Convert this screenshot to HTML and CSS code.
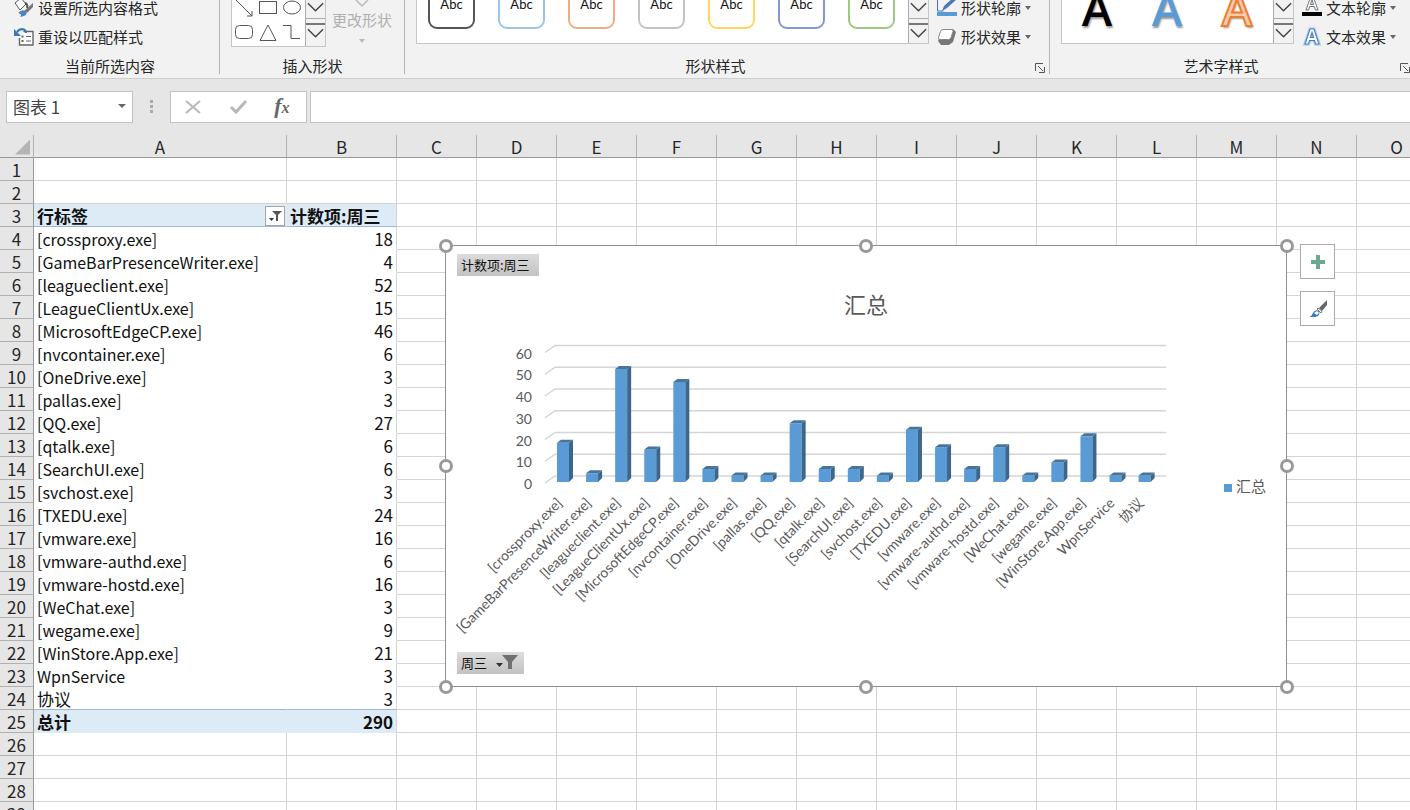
FILE: index.html
```html
<!DOCTYPE html>
<html lang="zh-CN">
<head>
<meta charset="utf-8">
<title>图表 1</title>
<link rel="stylesheet" href="styles.css">
</head>
<body>
<div class="app">
  <header class="ribbon">
    <section class="group group-selection">
      <div class="group-body">
        <div class="command-list">
          <button class="command">
            <svg class="icon" viewBox="0 0 20 20"><path d="M1 5 7 0l5 6-6 6z" fill="#fff" stroke="#555"/><path d="M11 5q3 1 2 5" fill="none" stroke="#555" stroke-width="2"/><path d="M19 5v4l-6 6-3-2z" fill="#777"/><path d="M4 15q4-4 7-2 3 3 0 4.500-3 1.500-5 1 3-2-2-3.500z" fill="#4a86c5"/></svg>
            设置所选内容格式
          </button>
          <button class="command">
            <svg class="icon" viewBox="0 0 20 20"><path d="M9.500 4.500h9.500v13.500H5.500V11" fill="#fff" stroke="#666" stroke-width="1.400"/><path d="M7.500 9.500h2M7.500 14h2" stroke="#666" stroke-width="2.200"/><path d="M12 9.500h5M12 14h5" stroke="#666" stroke-width="1.200"/><path d="M3 5q3-4 7-2.500 2 1 2 3.500" fill="none" stroke="#3c78b4" stroke-width="2.200"/><path d="M0 2v7h7z" fill="#3c78b4"/></svg>
            重设以匹配样式
          </button>
        </div>
      </div>
      <h2 class="group-label">当前所选内容</h2>
    </section>

    <section class="group group-insert">
      <div class="group-body">
        <div class="gallery shapes">
          <svg class="shape-art" viewBox="0 0 73 46" fill="none" stroke="#555"><path d="M4 0 20 16M20 11v5h-5"/><rect x="27.500" y="1.500" width="17" height="12"/><ellipse cx="60" cy="7.500" rx="8.500" ry="6.500"/><rect x="3.500" y="25.500" width="17" height="13" rx="4"/><path d="M36 25 44 40.500H28zM51 25.500h8v13h9"/></svg>
          <div class="scroller"><button class="scroll-btn" aria-label="下一行"><svg viewBox="0 0 20 12"><path d="m2 2 8 8 8-8"/></svg></button><button class="scroll-btn more" aria-label="其他形状"><svg viewBox="0 0 20 12"><path d="m2 2 8 8 8-8"/></svg></button></div>
        </div>
        <button class="change-shape" disabled>
          <svg class="change-icon" viewBox="0 0 16 8"><path d="m2 0 6 6 6-6" fill="none" stroke="#bbb" stroke-width="1.500"/></svg>
          更改形状
          <span class="caret"></span>
        </button>
      </div>
      <h2 class="group-label">插入形状</h2>
    </section>

    <section class="group group-styles">
      <div class="group-body">
        <div class="gallery presets">
          <button class="preset black">Abc</button><button class="preset blue">Abc</button><button class="preset orange">Abc</button><button class="preset gray">Abc</button><button class="preset gold">Abc</button><button class="preset indigo">Abc</button><button class="preset green">Abc</button>
          <div class="scroller"><button class="scroll-btn" aria-label="下一行"><svg viewBox="0 0 20 12"><path d="m2 2 8 8 8-8"/></svg></button><button class="scroll-btn more" aria-label="其他样式"><svg viewBox="0 0 20 12"><path d="m2 2 8 8 8-8"/></svg></button></div>
        </div>
        <div class="command-list">
          <button class="command">
            <svg class="icon" viewBox="0 0 20 20"><path d="M.500 0v13h6" fill="none" stroke="#4472b0"/><path d="m5 13 2-5L17-1l3 2-10 9z" fill="#4a78b8"/><path d="M0 14h20v4H0z" fill="#5b9bd5"/></svg>
            形状轮廓<span class="caret"></span>
          </button>
          <button class="command">
            <svg class="icon" viewBox="0 0 20 20"><path d="M6 2h10l3 3-3 10-4 3H4l-3-4z" fill="#777"/><path d="M6.500 2.500h8q2 0 1.500 2l-2 6q-.500 2-2.500 2H3q-2 0-1.500-2l2-6q.500-2 3-2z" fill="#fff" stroke="#888"/></svg>
            形状效果<span class="caret"></span>
          </button>
        </div>
      </div>
      <h2 class="group-label">形状样式</h2>
      <button class="launcher" aria-label="设置形状格式"><svg viewBox="0 0 10 10"><path d="M.500 8V.500H8M3 3l5 5M9.500 4v5.500H4"/></svg></button>
    </section>

    <section class="group group-wordart">
      <div class="group-body">
        <div class="gallery wordart">
          <button class="art art-black">A</button><button class="art art-blue">A</button><button class="art art-orange">A</button>
          <div class="scroller"><button class="scroll-btn" aria-label="下一行"><svg viewBox="0 0 20 12"><path d="m2 2 8 8 8-8"/></svg></button><button class="scroll-btn more" aria-label="其他艺术字"><svg viewBox="0 0 20 12"><path d="m2 2 8 8 8-8"/></svg></button></div>
        </div>
        <div class="command-list">
          <button class="command">
            <svg class="icon" viewBox="0 0 20 20"><path d="m4 12 5-14h2l5 14h-2.500l-1.200-3.500H7.700L6.500 12zM8.400 6.500h3.200L10 1.500z" fill="#fff" stroke="#555" stroke-width=".8"/><path d="M0 14h20v4H0z"/></svg>
            文本轮廓<span class="caret"></span>
          </button>
          <button class="command">
            <svg class="icon" viewBox="0 0 20 20"><path d="m3 17 5-15h4l5 15h-3.500l-1-3.500h-5l-1 3.500zM8.400 10.500h3.200L10 5.500z" fill="#fff" stroke="#b9d3ef" stroke-width="3.500"/><path d="m3 17 5-15h4l5 15h-3.500l-1-3.500h-5l-1 3.500zM8.400 10.500h3.200L10 5.500z" fill="#fff" stroke="#4a80bf" stroke-width="1.200"/></svg>
            文本效果<span class="caret"></span>
          </button>
        </div>
      </div>
      <h2 class="group-label">艺术字样式</h2>
      <button class="launcher" aria-label="设置文本效果格式"><svg viewBox="0 0 10 10"><path d="M.500 8V.500H8M3 3l5 5M9.500 4v5.500H4"/></svg></button>
    </section>
  </header>

  <div class="formula-bar">
    <button class="name-box">图表 1<span class="caret"></span></button>
    <svg class="grip" viewBox="0 0 4 14"><path d="M0 0h3v3H0zM0 5h3v3H0zM0 10h3v3H0z" fill="#aaa"/></svg>
    <div class="formula-actions">
      <button aria-label="取消"><svg viewBox="0 0 18 18"><path d="m2 3 14 12M16 3 2 15" stroke="#b8b8b8" stroke-width="2" fill="none"/></svg></button>
      <button aria-label="输入"><svg viewBox="0 0 18 18"><path d="m2 9 5 5L17 3" stroke="#b8b8b8" stroke-width="3" fill="none"/></svg></button>
      <button class="fx" aria-label="插入函数">f<span class="fx-sub">x</span></button>
    </div>
    <input class="formula-input" type="text" aria-label="编辑栏">
  </div>

  <main class="sheet">
    <table class="grid">
      <colgroup id="cols"></colgroup>
      <thead><tr id="heads"></tr></thead>
      <tbody id="rows"></tbody>
    </table>

    <figure class="chart">
      <button class="field-btn field-value">计数项:周三</button>
      <figcaption class="chart-title">汇总</figcaption>
      <svg class="plot" id="plot" viewBox="445 245 842 442"></svg>
      <div class="legend"><span class="legend-key"></span>汇总</div>
      <button class="field-btn field-axis">周三
        <svg class="field-filter" viewBox="0 0 22 16"><path d="M0 9h7l-3.500 4z" fill="#333"/><path d="M6 1h16l-6 7v7h-4V8z" fill="#707070"/></svg>
      </button>
      <i class="handle nw"></i><i class="handle n"></i><i class="handle ne"></i><i class="handle w"></i><i class="handle e"></i><i class="handle sw"></i><i class="handle s"></i><i class="handle se"></i>
      <div class="chart-tools">
        <button aria-label="图表元素"><svg viewBox="0 0 20 20"><path d="M8 3h4v5h5v4h-5v5H8v-5H3V8h5z" fill="#6aa88f"/></svg></button>
        <button aria-label="图表样式"><svg viewBox="0 0 20 20"><path d="m19 1-8 8 3 3 5-6z" fill="#666"/><path d="m10 9 4 3-1 2-4-4z" fill="#fff" stroke="#777"/><path d="M1 18q3-1 4-4 2-4 6-2 2 5-4 6z" fill="#3f7ab8"/><path d="m6 14 3-2 2 2-2 2z" fill="#fff"/></svg></button>
      </div>
    </figure>
  </main>
</div>
<script src="app.js"></script>
</body>
</html>
```
FILE: styles.css
```css
* { box-sizing: border-box; }
body {
  margin: 0;
  font-family: "Noto Sans CJK SC", sans-serif;
  color: #262626;
  background: #fff;
}
button {
  margin: 0;
  padding: 0;
  border: 0;
  background: none;
  font: inherit;
  color: inherit;
}
svg { display: block; }
.app {
  display: flex;
  flex-direction: column;
  height: 100vh;
  overflow: hidden;
  background: #e6e6e6;
}

/* ribbon */
.ribbon {
  display: flex;
  flex: none;
  overflow: hidden;
  background: #f2f2f2;
  border-bottom: 1px solid #cfcfcf;
  font-size: 15px;
}
.group {
  position: relative;
  display: flex;
  flex-direction: column;
  flex: none;
  height: 78px;
}
.group::after {
  content: "";
  position: absolute;
  right: 0;
  top: 0;
  height: 74px;
  border-right: 1px solid #b5b5b5;
}
.group-selection { width: 220px; }
.group-insert { width: 185px; }
.group-styles { flex: 1; }
.group-wordart { width: 360px; }
.group-wordart::after { display: none; }
.group-body {
  display: flex;
  align-items: flex-end;
  height: 52px;
}
.group-label {
  margin: 0;
  text-align: center;
  font-size: 15px;
  font-weight: 400;
  line-height: 28px;
}
.group-wordart .group-label { width: 342px; }
.group-styles .group-label { padding-right: 24px; }
.command-list { display: flex; flex-direction: column; padding-bottom: 1px; }
.group-selection .command-list { padding-left: 14px; }
.group-styles .command-list { flex: none; width: 113px; }
.command {
  display: flex;
  align-items: center;
  gap: 4px;
  height: 29px;
  white-space: nowrap;
}
.icon { width: 20px; height: 20px; overflow: visible; }
.caret {
  border: 3px solid transparent;
  border-top: 4px solid #666;
  border-bottom-width: 0;
}
.name-box .caret { border-width: 4px 4px 0; }
.gallery {
  display: flex;
  align-items: flex-end;
  background: #fff;
  border: 1px solid #c6c6c6;
  border-top: 0;
}
.shapes { height: 47px; margin: 0 6px 5px 11px; }
.shape-art { width: 73px; height: 46px; }
.scroller {
  display: flex;
  flex-direction: column;
  flex: none;
  width: 20px;
  height: 100%;
  margin-left: auto;
  background: #f2f2f2;
  border-left: 1px solid #ababab;
}
.scroll-btn {
  display: flex;
  flex-direction: column;
  flex: none;
  height: 19px;
  padding-top: 1px;
  border-bottom: 1px solid #ababab;
}
.scroll-btn.more { flex: 1; padding-top: 4px; border-bottom: 0; }
.scroll-btn.more::before {
  content: "";
  width: 100%;
  margin-bottom: 2px;
  border-top: 2px solid #777;
}
.scroll-btn svg { width: 19px; height: 12px; fill: none; stroke: #444; stroke-width: 1.5; }
.change-shape {
  display: flex;
  flex-direction: column;
  align-items: center;
  height: 52px;
  line-height: 24px;
  color: #b0b0b0;
}
.change-icon { width: 16px; height: 8px; }
.change-shape .caret { margin-top: 7px; border-top-color: #b8b8b8; }
.presets {
  flex: 1;
  height: 44px;
  margin: 0 8px 8px 11px;
  padding-left: 11px;
}
.preset {
  flex: none;
  width: 47px;
  height: 60px;
  margin-bottom: 14px;
  padding-top: 10px;
  border: 2px solid;
  border-radius: 9px;
  background: #fff;
  font-family: Lato, sans-serif;
  font-size: 13px;
  color: #111;
}
.preset + .preset { margin-left: 23px; }
.preset.black { border-color: #555; }
.preset.blue { border-color: #9dc3e6; }
.preset.orange { border-color: #f0ac84; }
.preset.gray { border-color: #c3c3c3; }
.preset.gold { border-color: #ffd75e; }
.preset.indigo { border-color: #8497d0; }
.preset.green { border-color: #9dc983; }
.wordart { width: 233px; height: 44px; margin: 0 8px 8px 11px; }
.art {
  width: 70px;
  height: 70px;
  font-family: "Open Sans", sans-serif;
  font-size: 46px;
  font-weight: 600;
  line-height: 70px;
  text-shadow: 1px 2px 2px #999;
}
.art-black { color: #000; }
.art-blue { color: #5b9bd5; }
.art-orange { color: #f8cbad; -webkit-text-stroke: 2px #ed7d31; }
.launcher { position: absolute; right: 5px; bottom: 5px; }
.group-wordart .launcher { right: 0; }
.launcher svg { width: 10px; height: 10px; fill: none; stroke: #555; }

/* formula bar */
.formula-bar {
  display: flex;
  flex: none;
  height: 56px;
  padding: 12px 0 12px 6px;
}
.name-box, .formula-actions, .formula-input {
  border: 1px solid #c3c3c3;
  background: #fff;
}
.name-box {
  display: flex;
  align-items: center;
  justify-content: space-between;
  width: 127px;
  padding: 0 6px 2px;
  font-size: 17px;
  color: #444;
}
.grip { width: 4px; height: 14px; margin: 9px 16px 0 17px; }
.formula-actions {
  display: flex;
  align-items: center;
  justify-content: space-around;
  width: 137px;
  padding-right: 3px;
}
.formula-actions svg { width: 18px; height: 18px; }
.fx {
  font-family: "Liberation Serif", serif;
  font-size: 22px;
  font-style: italic;
  font-weight: 700;
  line-height: 24px;
  color: #666;
}
.fx-sub { font-size: 16px; }
.formula-input {
  flex: 1;
  min-width: 0;
  margin-left: 3px;
  border-right: 0;
  border-radius: 0;
}

/* sheet */
.sheet {
  position: relative;
  flex: 1;
  min-height: 0;
  overflow: hidden;
  font-size: 17px;
}
.grid {
  width: 1437px;
  table-layout: fixed;
  border-collapse: separate;
  border-spacing: 0;
}
.col-head { width: 34px; }
.col-a { width: 253px; }
.col-b { width: 110px; }
.col-n { width: 80px; }
.grid th, .grid td {
  height: 23px;
  padding: 2px 3px 0;
  line-height: 20px;
  white-space: nowrap;
  border-right: 1px solid #d4d4d4;
  border-bottom: 1px solid #d4d4d4;
}
.grid td { background: #fff; color: #111; }
.grid thead th, .grid .row-head {
  background: #e6e6e6;
  font-weight: 400;
  border-color: #b1b1b1;
}
.grid thead th { border-bottom-color: #999; }
.grid .row-head { padding: 2px 0 0; border-right-color: #999; }
.corner-mark {
  width: 15px;
  height: 15px;
  margin-left: auto;
  background: #b4b4b4;
  clip-path: polygon(100% 0, 100% 100%, 0 100%);
}
.grid .pivot { border-bottom-color: #fff; }
.grid .pivot-a { border-right-color: #fff; }
.grid .pivot-name { font-size: 16px; }
.grid .pivot-num { text-align: right; }
.grid .pivot-band {
  background: #ddebf7;
  border-bottom-color: #ddebf7;
  font-weight: 700;
}
.grid .pivot-band.pivot-a { border-right-color: #ddebf7; }
.grid .pivot-rule { border-bottom-color: #9bb8d8; }
.pivot-title { display: flex; align-items: center; justify-content: space-between; height: 20px; }
.filter-btn {
  width: 20px;
  height: 20px;
  margin-right: -2px;
  border: 1px solid #a6a6a6;
  background: #fff;
}
.filter-btn svg { width: 18px; height: 18px; }

/* chart */
.chart {
  position: absolute;
  left: 445px;
  top: 110px;
  width: 842px;
  height: 442px;
  margin: 0;
  background: #fff;
  border: 1px solid #8f8f8f;
  color: #595959;
}
.plot {
  position: absolute;
  left: -1px;
  top: -1px;
  width: 842px;
  height: 442px;
}
.plot text { font-family: Lato, "Noto Sans CJK SC", sans-serif; font-size: 14px; fill: #595959; text-anchor: end; }
.plot .grid-line { fill: none; stroke: #d5d5d5; stroke-width: 1.5; }
.bar-front { fill: #5b9bd5; }
.bar-side { fill: #3b668d; }
.bar-top { fill: #45759f; }
.chart-title {
  padding-top: 40px;
  text-align: center;
  font-size: 22px;
  line-height: 34px;
}
.legend {
  position: absolute;
  right: 20px;
  top: 230px;
  display: flex;
  align-items: center;
  gap: 4px;
  font-size: 15px;
  line-height: 20px;
}
.legend-key { width: 8px; height: 8px; margin-top: 4px; background: #5b9bd5; }
.field-btn {
  position: absolute;
  z-index: 1;
  left: 11px;
  display: flex;
  align-items: center;
  height: 22px;
  padding: 0 4px 2px;
  background: linear-gradient(#dcdcdc, #c2c2c2);
  color: #111;
  font-size: 13px;
}
.field-value { top: 8px; width: 82px; }
.field-axis { top: 406px; width: 67px; gap: 9px; }
.field-filter { width: 22px; height: 16px; flex: none; }
.handle {
  position: absolute;
  width: 14px;
  height: 14px;
  border: 3px solid #999;
  border-radius: 50%;
  background: #fff;
}
.nw, .n, .ne { top: -7px; }
.w, .e { top: 213px; }
.sw, .s, .se { bottom: -8px; }
.nw, .w, .sw { left: -7px; }
.n, .s { left: 413px; }
.ne, .e, .se { right: -8px; }
.chart-tools {
  position: absolute;
  left: 854px;
  top: -2px;
  display: grid;
  gap: 12px;
}
.chart-tools button {
  display: grid;
  place-items: center;
  width: 35px;
  height: 35px;
  border: 1px solid #ababab;
  background: #fff;
}
.chart-tools svg { width: 20px; height: 20px; }
```
FILE: app.js
```js
const items = [
  ["[crossproxy.exe]", 18], ["[GameBarPresenceWriter.exe]", 4], ["[leagueclient.exe]", 52],
  ["[LeagueClientUx.exe]", 15], ["[MicrosoftEdgeCP.exe]", 46], ["[nvcontainer.exe]", 6],
  ["[OneDrive.exe]", 3], ["[pallas.exe]", 3], ["[QQ.exe]", 27], ["[qtalk.exe]", 6],
  ["[SearchUI.exe]", 6], ["[svchost.exe]", 3], ["[TXEDU.exe]", 24], ["[vmware.exe]", 16],
  ["[vmware-authd.exe]", 6], ["[vmware-hostd.exe]", 16], ["[WeChat.exe]", 3],
  ["[wegame.exe]", 9], ["[WinStore.App.exe]", 21], ["WpnService", 3], ["协议", 3]
];
const letters = [..."ABCDEFGHIJKLMNO"];

document.getElementById("cols").innerHTML = '<col class="col-head">' +
  letters.map(l => `<col class="col-${l === "A" ? "a" : l === "B" ? "b" : "n"}">`).join("");
document.getElementById("heads").innerHTML = '<th><div class="corner-mark"></div></th>' +
  letters.map(l => `<th scope="col">${l}</th>`).join("");

const filterButton = '<button class="filter-btn" aria-label="筛选"><svg viewBox="0 0 18 18"><path d="M6 4h10l-4 4v6h-2V8z" fill="#555"/><path d="M3 11h5l-2.500 3z" fill="#333"/></svg></button>';

// Cells A and B of one row of the pivot table, or plain cells outside it
function pivotCells(row) {
  if (row === 3) {
    return `<td class="pivot-band pivot-rule pivot-a"><div class="pivot-title">行标签${filterButton}</div></td><td class="pivot-band pivot-rule">计数项:周三</td>`;
  }
  if (row === 25) {
    return '<td class="pivot-band pivot-a">总计</td><td class="pivot-band pivot-num">290</td>';
  }
  if (row > 3 && row < 25) {
    const [name, count] = items[row - 4];
    const rule = row === 24 ? " pivot-rule" : "";
    const size = row === 24 ? "" : " pivot-name";
    return `<td class="pivot pivot-a${rule}${size}">${name}</td><td class="pivot pivot-num${rule}">${count}</td>`;
  }
  return "<td></td><td></td>";
}

let rows = "";
for (let r = 1; r <= 40; r++) {
  rows += `<tr><th scope="row" class="row-head">${r}</th>${pivotCells(r)}${"<td></td>".repeat(letters.length - 2)}</tr>`;
}
document.getElementById("rows").innerHTML = rows;

// 3-D column plot: one unit of value is 2.175 high, the walls recede by 10 x 7
const unit = 2.175;
let plot = "";
for (let v = 0; v <= 60; v += 10) {
  const y = 476 - v * unit;
  plot += `<path class="grid-line" d="M545 ${y + 7} 555 ${y}H1166"/><text x="532" y="${y + 13}">${v}</text>`;
}
items.forEach(([name, count], i) => {
  const x = 557 + i * 29.08;
  const base = 482;
  const top = base - count * unit;
  plot += `<path class="bar-front" d="M${x} ${base}V${top}h12V${base}z"/>` +
    `<path class="bar-side" d="M${x + 12} ${base}V${top}l4-3V${base - 4}z"/>` +
    `<path class="bar-top" d="M${x} ${top}l4-3h12l-4 3z"/>` +
    `<text transform="translate(${x + 6} 504) rotate(-45)">${name}</text>`;
});
document.getElementById("plot").innerHTML = plot;
```
